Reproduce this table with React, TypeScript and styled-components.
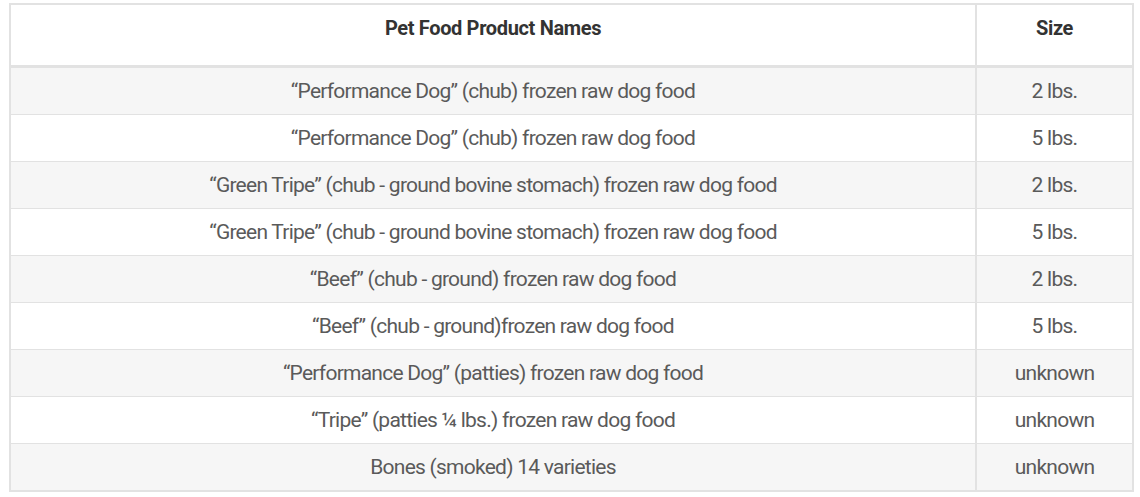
import React from 'react';
import styled, { createGlobalStyle } from 'styled-components';

const GlobalStyle = createGlobalStyle`
  html, body {
    margin: 0;
    padding: 0;
    background: #ffffff;
  }
  body {
    font-family: Roboto, "Liberation Sans", sans-serif;
  }
`;

const Page = styled.div`
  width: 1140px;
  height: 497px;
  padding: 3px 6px 0 9px;
  box-sizing: border-box;
`;

const Table = styled.table`
  width: 1125px;
  table-layout: fixed;
  border-collapse: collapse;
  border: 2px solid #e2e2e2;
  color: #5a5a5a;
`;

const HeadCell = styled.th<{ $narrow?: boolean }>`
  box-sizing: border-box;
  height: 62px;
  padding: 0 10px 14px;
  border-right: 2px solid #e2e2e2;
  border-bottom: 3px solid #e2e2e2;
  width: ${(p) => (p.$narrow ? '157px' : 'auto')};
  font-size: 20px;
  font-weight: 700;
  color: #333333;
  letter-spacing: -0.35px;
  text-align: center;
  vertical-align: middle;
`;

const Row = styled.tr<{ $shaded: boolean }>`
  background: ${(p) => (p.$shaded ? '#f6f6f6' : '#ffffff')};
`;

const Cell = styled.td`
  height: 46px;
  padding: 0 10px;
  border-right: 2px solid #e2e2e2;
  border-bottom: 1px solid #e2e2e2;
  font-size: 21px;
  font-weight: 400;
  letter-spacing: -0.75px;
  text-align: center;
  vertical-align: middle;
`;

const products = [
  { name: '“Performance Dog” (chub) frozen raw dog food', size: '2 lbs.' },
  { name: '“Performance Dog” (chub) frozen raw dog food', size: '5 lbs.' },
  { name: '“Green Tripe” (chub - ground bovine stomach) frozen raw dog food', size: '2 lbs.' },
  { name: '“Green Tripe” (chub - ground bovine stomach) frozen raw dog food', size: '5 lbs.' },
  { name: '“Beef” (chub - ground) frozen raw dog food', size: '2 lbs.' },
  { name: '“Beef” (chub - ground)frozen raw dog food', size: '5 lbs.' },
  { name: '“Performance Dog” (patties) frozen raw dog food', size: 'unknown' },
  { name: '“Tripe” (patties ¼ lbs.) frozen raw dog food', size: 'unknown' },
  { name: 'Bones (smoked) 14 varieties', size: 'unknown' },
];

const App: React.FC = () => (
  <Page>
    <GlobalStyle />
    <Table>
      <thead>
        <tr>
          <HeadCell>Pet Food Product Names</HeadCell>
          <HeadCell $narrow>Size</HeadCell>
        </tr>
      </thead>
      <tbody>
        {products.map((p, i) => (
          <Row key={i} $shaded={i % 2 === 0}>
            <Cell>{p.name}</Cell>
            <Cell>{p.size}</Cell>
          </Row>
        ))}
      </tbody>
    </Table>
  </Page>
);

export default App;
